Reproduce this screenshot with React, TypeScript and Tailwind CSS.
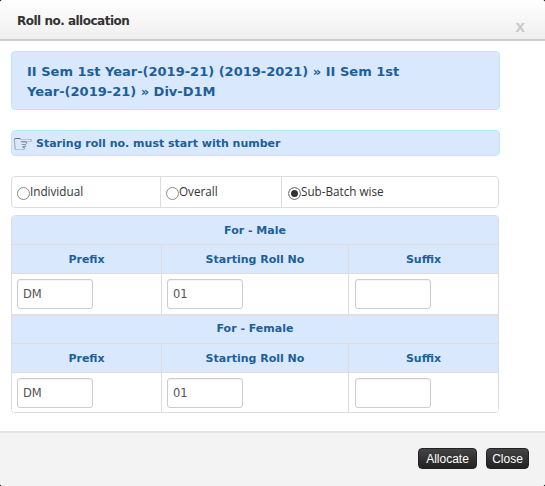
import React from 'react';

const heading = "font-['DejaVu_Sans',sans-serif] font-bold text-[#1c5f99]";

function RollInput({ value }: { value: string }) {
  return (
    <input
      readOnly
      value={value}
      className="w-[76px] h-[30px] px-[5px] bg-white border border-[#ccc] rounded-[3px] text-[11.5px] text-[#555] font-['DejaVu_Sans',sans-serif] shadow-[inset_0_1px_1px_rgba(0,0,0,0.05)] outline-none"
    />
  );
}

function GenderBlock({ title, male }: { title: string; male?: boolean }) {
  return (
    <div className={male ? '' : 'border-t-2 border-[#e0e0e0]'}>
      <div className={`${male ? 'h-[28px] pt-[3px]' : 'h-[27px]'} bg-[#d9e8fd] flex items-center justify-center text-[11px] ${heading}`}>{title}</div>
      <div className="grid grid-cols-[150px_187px_1fr] h-[30px] bg-[#d9e8fd] border-y border-[#ddd]">
        {['Prefix', 'Starting Roll No', 'Suffix'].map((label, i) => (
          <div
            key={label}
            className={`flex items-center justify-center pt-[3px] text-[11px] ${heading} ${i < 2 ? 'border-r border-[#ddd]' : ''}`}
          >
            {label}
          </div>
        ))}
      </div>
      <div className={`grid grid-cols-[150px_187px_1fr] bg-white ${male ? 'h-[40px]' : 'h-[39px]'}`}>
        {['DM', '01', ''].map((v, i) => (
          <div key={i} className={`flex items-center ${i < 2 ? 'pl-[5px] border-r border-[#ddd]' : 'pl-[6px]'}`}>
            <RollInput value={v} />
          </div>
        ))}
      </div>
    </div>
  );
}

function Radio({ label, checked, className }: { label: string; checked?: boolean; className?: string }) {
  return (
    <div className={`flex items-center text-[11.7px] text-[#333] font-['Open_Sans',sans-serif] ${className ?? ''}`}>
      <input
        type="radio"
        readOnly
        checked={!!checked}
        className="appearance-none w-[13px] h-[13px] mt-[3px] rounded-full border border-[#888] bg-white checked:bg-[#333] checked:shadow-[inset_0_0_0_2px_#fff]"
      />
      <span className="-mt-[1px]">{label}</span>
    </div>
  );
}

export default function App() {
  return (
    <div className="w-[545px] h-[486px] bg-black">
      <div className="w-full h-full bg-white rounded-[3px] flex flex-col overflow-hidden">
        <div className="h-[41px] shrink-0 flex justify-between bg-gradient-to-b from-white to-[#efefef] border-b-2 border-[#ccc]">
          <div className="pl-[17px] pt-[14px] text-[12px] leading-[15px] font-bold text-[#333] font-['DejaVu_Sans',sans-serif] tracking-[-0.5px]">
            Roll no. allocation
          </div>
          <div className="pr-[20px] pt-[17px] text-[17px] leading-[20px] font-bold text-[#c8c8c8] font-['Liberation_Sans',sans-serif]">
            x
          </div>
        </div>

        <div className="flex-1 pl-[11px] pt-[10px]">
          <div className={`w-[489px] h-[59px] pl-[15px] pr-[60px] pt-[10px] bg-[#d9e8fd] border border-[#bce8f1] rounded-[4px] text-[13px] leading-[20px] ${heading}`}>
            II Sem 1st Year-(2019-21) (2019-2021) » II Sem 1st Year-(2019-21) » Div-D1M
          </div>

          <div className={`w-[489px] h-[26px] mt-[20px] flex items-center pt-[2px] bg-[#d9e8fd] border border-[#bce8f1] rounded-[4px] text-[11px] ${heading}`}>
            <span className="w-[24px] text-[24px] leading-none font-normal text-[#555]">☞</span>
            <span>Staring roll no. must start with number</span>
          </div>

          <div className="w-[488px] h-[32px] mt-[20px] grid grid-cols-[149px_121px_1fr] border border-[#ddd] rounded-[4px]">
            <Radio label="Individual" className="pl-[5px] border-r border-[#ddd]" />
            <Radio label="Overall" className="pl-[5px] border-r border-[#ddd]" />
            <Radio label="Sub-Batch wise" checked className="pl-[6px]" />
          </div>

          <div className="w-[488px] mt-[7px] border border-[#ddd] rounded-[4px] overflow-hidden">
            <GenderBlock title="For - Male" male />
            <GenderBlock title="For - Female" />
          </div>
        </div>

        <div className="h-[55px] shrink-0 flex justify-end items-start gap-[9px] pt-[15px] pr-[16px] bg-[#f3f3f3] border-t-2 border-[#e3e3e3]">
          <button className="w-[59px] h-[21px] rounded-[4px] border border-[#222] bg-gradient-to-b from-[#444] to-[#222] text-white text-[12px] font-['Liberation_Sans',sans-serif]">
            Allocate
          </button>
          <button className="w-[43px] h-[21px] rounded-[4px] border border-[#222] bg-gradient-to-b from-[#444] to-[#222] text-white text-[12px] font-['Liberation_Sans',sans-serif]">
            Close
          </button>
        </div>
      </div>
    </div>
  );
}
